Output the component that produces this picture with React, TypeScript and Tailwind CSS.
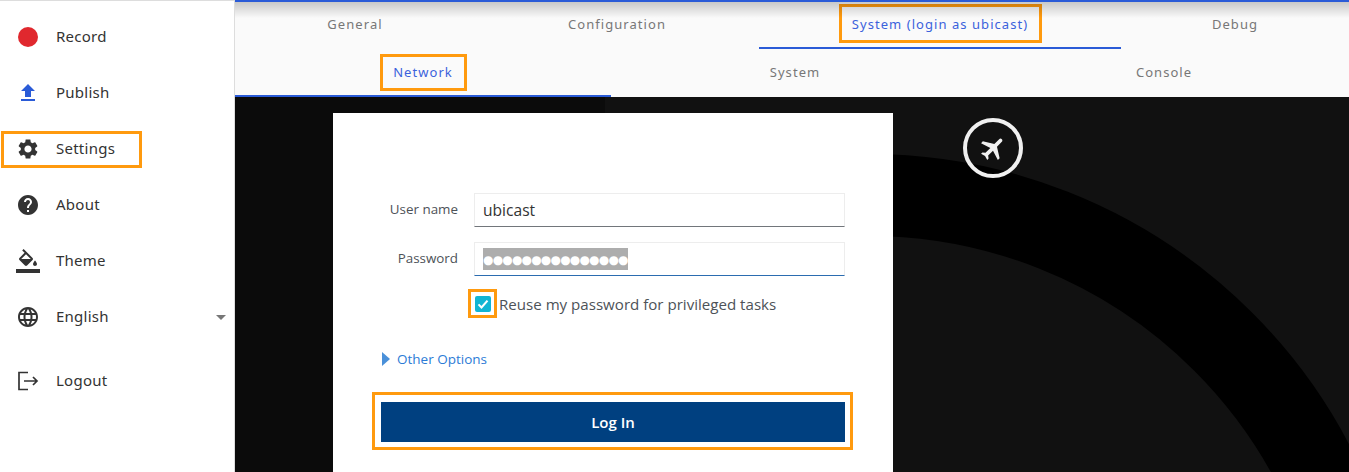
import type { ReactNode } from 'react';

const BOX = 'border-[3px] border-[#ff9a0e]';

function Icon({ d, className = 'text-[#333]' }: { d: string; className?: string }) {
  return (
    <svg viewBox="0 0 24 24" className={`w-6 h-6 fill-current ${className}`}>
      <path d={d} />
    </svg>
  );
}

function NavItem({ icon, label, boxed, trailing, className = '' }: { icon: ReactNode; label: string; boxed?: boolean; trailing?: ReactNode; className?: string }) {
  return (
    <div className={`relative flex items-center h-14 pl-4 text-[15px] tracking-[0.25px] text-[#333] ${className}`}>
      <span className="w-6 h-6 flex items-center justify-center shrink-0">{icon}</span>
      <span className="ml-4 mb-[2px]">{label}</span>
      {trailing}
      {boxed && <span className={`absolute left-[1px] top-[10px] w-[141px] h-[37px] ${BOX}`} />}
    </div>
  );
}

function Sidebar() {
  return (
    <aside className="w-[235px] shrink-0 h-full border-r border-[#ddd] border-t bg-white pt-[8px] font-['Noto_Sans',sans-serif]">
      <NavItem label="Record" icon={<span className="w-5 h-5 rounded-full bg-[#e0282e]" />} />
      <NavItem label="Publish" icon={<Icon className="text-[#2a5bd7]" d="M9 16h6v-6h4l-7-7-7 7h4zm-4 2h14v2H5z" />} />
      <NavItem
        label="Settings"
        boxed
        icon={<Icon d="M19.14 12.94c.04-.3.06-.61.06-.94 0-.32-.02-.64-.07-.94l2.03-1.58c.18-.14.23-.41.12-.61l-1.92-3.32c-.12-.22-.37-.29-.59-.22l-2.39.96c-.5-.38-1.03-.7-1.62-.94l-.36-2.54c-.04-.24-.24-.41-.48-.41h-3.84c-.24 0-.43.17-.47.41l-.36 2.54c-.59.24-1.13.57-1.62.94l-2.39-.96c-.22-.08-.47 0-.59.22L2.74 8.87c-.12.21-.08.47.12.61l2.03 1.58c-.05.3-.09.63-.09.94s.02.64.07.94l-2.03 1.58c-.18.14-.23.41-.12.61l1.92 3.32c.12.22.37.29.59.22l2.39-.96c.5.38 1.03.7 1.62.94l.36 2.54c.05.24.24.41.48.41h3.84c.24 0 .44-.17.47-.41l.36-2.54c.59-.24 1.13-.56 1.62-.94l2.39.96c.22.08.47 0 .59-.22l1.92-3.32c.12-.22.07-.47-.12-.61l-2.01-1.58zM12 15.6c-1.98 0-3.6-1.62-3.6-3.6s1.62-3.6 3.6-3.6 3.6 1.62 3.6 3.6-1.62 3.6-3.6 3.6z" />}
      />
      <NavItem label="About" icon={<Icon d="M12 2C6.48 2 2 6.48 2 12s4.48 10 10 10 10-4.48 10-10S17.52 2 12 2zm1 17h-2v-2h2v2zm2.07-7.75l-.9.92C13.45 12.9 13 13.5 13 15h-2v-.5c0-1.1.45-2.1 1.17-2.83l1.24-1.26c.37-.36.59-.86.59-1.41 0-1.1-.9-2-2-2s-2 .9-2 2H8c0-2.21 1.79-4 4-4s4 1.79 4 4c0 .88-.36 1.68-.93 2.25z" />} />
      <NavItem label="Theme" icon={<Icon d="M16.56 8.94L7.62 0 6.21 1.41l2.38 2.38-5.15 5.15c-.59.59-.59 1.54 0 2.12l5.5 5.5c.29.29.68.44 1.06.44s.77-.15 1.06-.44l5.5-5.5c.59-.58.59-1.53 0-2.12zM5.21 10L10 5.21 14.79 10H5.21zM19 11.5s-2 2.17-2 3.5c0 1.1.9 2 2 2s2-.9 2-2c0-1.33-2-3.5-2-3.5zM0 20h24v4H0z" />} />
      <NavItem
        label="English"
        icon={<Icon d="M11.99 2C6.47 2 2 6.48 2 12s4.47 10 9.99 10C17.52 22 22 17.52 22 12S17.52 2 11.99 2zm6.93 6h-2.95c-.32-1.25-.78-2.45-1.38-3.56 1.84.63 3.37 1.91 4.33 3.56zM12 4.04c.83 1.2 1.48 2.53 1.91 3.96h-3.82c.43-1.43 1.08-2.76 1.91-3.96zM4.26 14C4.1 13.36 4 12.69 4 12s.1-1.36.26-2h3.38c-.08.66-.14 1.32-.14 2 0 .68.06 1.34.14 2H4.26zm.82 2h2.95c.32 1.25.78 2.45 1.38 3.56-1.84-.63-3.37-1.9-4.33-3.56zm2.95-8H5.08c.96-1.66 2.49-2.93 4.33-3.56C8.81 5.55 8.35 6.75 8.03 8zM12 19.96c-.83-1.2-1.48-2.53-1.91-3.96h3.82c-.43 1.43-1.08 2.76-1.91 3.96zM14.34 14H9.66c-.09-.66-.16-1.32-.16-2 0-.68.07-1.35.16-2h4.68c.09.65.16 1.32.16 2 0 .68-.07 1.34-.16 2zm.25 5.56c.6-1.11 1.06-2.31 1.38-3.56h2.95c-.96 1.65-2.49 2.93-4.33 3.56zM16.36 14c.08-.66.14-1.32.14-2 0-.68-.06-1.34-.14-2h3.38c.16.64.26 1.31.26 2s-.1 1.36-.26 2h-3.38z" />}
        trailing={<span className="ml-auto mr-[8px] mt-[1px] w-0 h-0 border-x-[5px] border-x-transparent border-t-[5px] border-t-[#777]" />}
      />
      <NavItem
        label="Logout"
        className="mt-2"
        icon={
          <svg viewBox="0 0 24 24" className="w-6 h-6 fill-none stroke-[#333] stroke-[1.7]">
            <path d="M12 3.5H3v17h9M8 12h13M17 8l4 4-4 4" />
          </svg>
        }
      />
    </aside>
  );
}

function Tab({ label, width, active, box, lower }: { label: string; width: string; active?: boolean; box?: string; lower?: boolean }) {
  return (
    <div className={`${width} h-full flex items-center justify-center border-b-2 ${lower ? 'pt-[1px]' : 'pb-[3px]'} ${active ? 'border-[#2a5bd7]' : 'border-transparent'}`}>
      <span className={`flex items-center justify-center ${lower ? 'pt-[1px]' : 'pt-[3px]'} ${box ?? ''} ${active ? 'text-[#3b62dc]' : 'text-[#777]'}`}>{label}</span>
    </div>
  );
}

function Tabs() {
  return (
    <div className="relative shrink-0 bg-[#fafafa] font-['Noto_Sans',sans-serif] text-[13px] tracking-[1.05px] border-t-2 border-[#2a5bd7]">
      <div className="absolute left-0 right-0 top-0 h-4 bg-gradient-to-b from-black/20 to-transparent" />
      <div className="flex h-[47px]">
        <Tab label="General" width="w-[240px]" />
        <Tab label="Configuration" width="w-[284px]" />
        <Tab label="System (login as ubicast)" width="w-[362px]" active box={`w-[203px] h-[39px] ${BOX}`} />
        <Tab label="Debug" width="w-[228px]" />
      </div>
      <div className="flex h-[48px]">
        <Tab label="Network" width="w-[376px]" active lower box={`w-[87px] h-[37px] ${BOX}`} />
        <Tab label="System" width="w-[368px]" lower />
        <Tab label="Console" width="w-[370px]" lower />
      </div>
    </div>
  );
}

function Field({ label, focused, children }: { label: string; focused?: boolean; children: ReactNode }) {
  return (
    <div className="flex items-start">
      <label className="w-[125px] text-right text-[13.4px] leading-[33px] text-[#4d5258]">{label}</label>
      <div className={`ml-4 w-[371px] h-[34px] pl-[8px] flex items-center border border-[#ededed] border-b ${focused ? 'border-b-[#2b6cb0]' : 'border-b-[#72767b]'}`}>
        {children}
      </div>
    </div>
  );
}

function LoginCard() {
  return (
    <div className="w-[560px] h-[359px] shrink-0 bg-white pt-20 font-['Open_Sans',sans-serif]">
      <Field label="User name">
        <span className="pt-[2px] text-[15.6px] text-[#333]">ubicast</span>
      </Field>
      <div className="mt-[15px]">
        <Field label="Password" focused>
          <span className="bg-[#adadad] text-white h-[22px] whitespace-nowrap font-['DejaVu_Sans',sans-serif] text-[11.9px] tracking-[-0.73px] leading-[24px]">●●●●●●●●●●●●●●●</span>
        </Field>
      </div>
      <div className="mt-[13px] ml-[135px] flex items-center">
        <span className={`w-[29px] h-[29px] flex items-center justify-center ${BOX}`}>
          <span className="w-4 h-4 rounded-[2px] bg-[#12b5d3] flex items-center justify-center">
            <svg viewBox="0 0 16 16" className="w-3 h-3 fill-none stroke-white stroke-[2.8]">
              <path d="M2 8.5l4 4 8-9" />
            </svg>
          </span>
        </span>
        <span className="ml-[2px] pt-[1px] text-[15.1px] text-[#4d5258]">Reuse my password for privileged tasks</span>
      </div>
      <div className="mt-[29px] ml-[49px] flex items-center h-[24px]">
        <span className="w-0 h-0 border-y-[7px] border-y-transparent border-l-[8px] border-l-[#4a90d9]" />
        <span className="ml-[7px] text-[13.5px] text-[#2b7bd6]">Other Options</span>
      </div>
      <div className={`mt-[21px] ml-[39px] w-[481px] h-[58px] pl-[6px] pr-[5px] pt-[7px] ${BOX}`}>
        <button className="w-full h-10 bg-[#004080] text-white text-[15px] font-semibold">Log In</button>
      </div>
    </div>
  );
}

function Backdrop() {
  return (
    <svg className="absolute inset-0 w-full h-full" viewBox="0 0 1114 375">
      <rect x="0" y="0" width="370" height="375" fill="#0b0b0b" />
      <circle cx="634" cy="599" r="501" fill="none" stroke="#000" strokeWidth="82" />
    </svg>
  );
}

export default function App() {
  return (
    <div className="flex w-[1349px] h-[472px] overflow-hidden bg-white">
      <Sidebar />
      <main className="flex-1 min-w-0 flex flex-col">
        <Tabs />
        <div className="relative flex-1 bg-[#111] overflow-hidden">
          <Backdrop />
          <div className="relative flex items-start pl-[98px] pt-4">
            <LoginCard />
            <svg viewBox="0 0 60 60" className="ml-[70px] mt-[5px] w-[60px] h-[60px] shrink-0">
              <circle cx="30" cy="30" r="28" fill="none" stroke="#f0f0f0" strokeWidth="4" />
              <g transform="translate(30 30) rotate(45) scale(1.25) translate(-11.5 -12)" fill="#f0f0f0">
                <path d="M21 16v-2l-8-5V3.5c0-.83-.67-1.5-1.5-1.5S10 2.67 10 3.5V9l-8 5v2l8-2.5V19l-2 1.5V22l3.5-1 3.5 1v-1.5L13 19v-5.5l8 2.5z" />
              </g>
            </svg>
          </div>
        </div>
      </main>
    </div>
  );
}
